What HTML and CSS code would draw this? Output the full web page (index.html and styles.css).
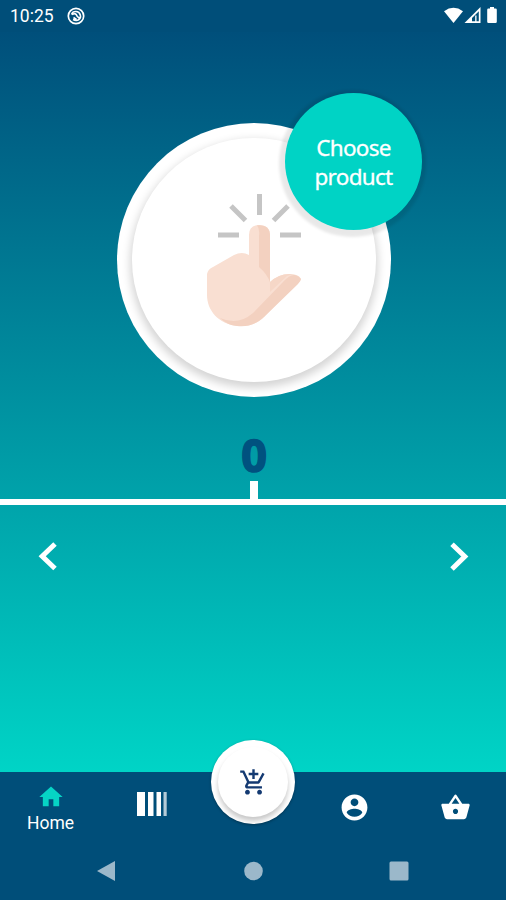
FILE: index.html
```html
<!DOCTYPE html>
<html lang="en">
<head>
    <meta charset="UTF-8">
    <meta name="viewport" content="width=device-width, initial-scale=1.0">
    <title>Home</title>
    <link rel="stylesheet" href="styles.css">
</head>
<body>
    <div class="status-bar">
        <span class="clock">10:25</span>
        <svg class="status-icon" width="18" height="18" viewBox="0 0 18 18" fill="none" stroke="#fff">
            <circle cx="9" cy="9" r="7.7" stroke-width="1.7"/>
            <path d="M4.500 7.500C6 3.500 12 3.500 13.300 8S10 14.500 6 12.500M5 7.500q4-2 5 1.500l3 3M6.500 10.500l3 2" stroke-width="1.600"/>
        </svg>
        <svg class="signals" width="54" height="18" viewBox="0 0 54 18" fill="#fff">
            <path d="M0 4.200Q9.500-2.600 19 4.200L9.500 16z"/>
            <path fill-rule="evenodd" d="M36.500 0v16H20.500zM34.800 4.300L28 11v3.300h3.200V8.500h1.300v5.800h2.300z"/>
            <path d="M46 1.500V0h4v1.500h1.500q1.300 0 1.300 1.300v11.900q0 1.300-1.300 1.300h-7q-1.300 0-1.300-1.300V2.800q0-1.300 1.300-1.300z"/>
        </svg>
    </div>

    <main class="content">
        <div class="product">
            <div class="product-inner">
                <svg width="94" height="134" viewBox="0 0 94 134">
                    <g stroke="#c5c5c5" stroke-width="5">
                        <path d="M52.500 1v21M24 13l14.500 14.500M81 13L66.500 27.500M11 42h21M73 42h21"/>
                    </g>
                    <path fill="#f9dfd2" d="M42 62V42Q42 32 52.500 32T63 42V89Q72 81 82 81 92 81 94 86L55 126Q45 134 31 133C11 131 0 117 0 102V81Q1 76 6 74L27 62Q35 58 42 62z"/>
                    <path fill="#f3d1c0" d="M50 32.300Q63 31 63 43V89Q60 81 52 74V43Q53 36 50 32.300z"/>
                    <path fill="#f6d7c7" d="M63 89Q72 81 82 81L86 81 80 83 63 99z"/>
                    <path fill="#f3d1c0" d="M13 125Q31 133 46 120L76 89Q83 81 88 82 92 83 94 86 94 88 91 91L57 124Q45 135 30 133 20 132 13 125z"/>
                </svg>
            </div>
            <div class="badge">Choose<br>product</div>
        </div>

        <div class="count">0</div>
        <div class="tick"></div>
        <div class="line"></div>

        <div class="arrows">
            <svg width="20" height="30" viewBox="0 0 20 30" fill="none" stroke="#fff" stroke-width="5">
                <path d="M17 3L4.200 15.200 17 27.500"/>
            </svg>
            <svg width="20" height="30" viewBox="0 0 20 30" fill="none" stroke="#fff" stroke-width="5">
                <path d="M3 3.200L15.800 15.500 3 28"/>
            </svg>
        </div>
    </main>

    <nav class="tabs">
        <a class="tab tab-home">
            <svg width="28" height="28" viewBox="0 0 24 24" fill="#06d4c5"><path d="M10 20v-6h4v6h5v-8h3L12 3 2 12h3v8z"/></svg>
            <span>Home</span>
        </a>
        <a class="tab tab-scan">
            <svg width="32" height="26" viewBox="0 0 32 26" fill="#fff">
                <path d="M1 1h8v24H1zM12 1h5.500v24h-5.500zM20.500 1h4.500v24h-4.500z"/>
                <path opacity=".7" d="M27.500 1h3.200v24h-3.200z"/>
            </svg>
        </a>
        <a class="tab tab-cart">
            <span class="cart">
                <span class="cart-inner">
                    <svg width="29" height="29" viewBox="0 0 24 24" fill="#143a72"><path d="M11 9h2V6h3V4h-3V1h-2v3H8v2h3v3zm-4 9c-1.100 0-1.990.9-1.990 2S5.900 22 7 22s2-.9 2-2-.9-2-2-2zm10 0c-1.100 0-1.990.9-1.990 2s.89 2 1.990 2 2-.9 2-2-.9-2-2-2zm-9.830-3.250l.03-.12.9-1.630h7.450c.75 0 1.410-.41 1.750-1.030l3.860-7.010L19.420 4h-.01l-1.100 2-2.760 5H8.530l-.13-.27L6.160 6l-.95-2-.94-2H1v2h2l3.600 7.590-1.350 2.450c-.16.28-.25.61-.25.96 0 1.100.9 2 2 2h12v-2H7.420c-.13 0-.25-.11-.25-.25z"/></svg>
                </span>
            </span>
        </a>
        <a class="tab">
            <svg width="31" height="31" viewBox="0 0 24 24" fill="#fff"><path d="M12 2C6.480 2 2 6.480 2 12s4.480 10 10 10 10-4.480 10-10S17.520 2 12 2zm0 3c1.660 0 3 1.340 3 3s-1.340 3-3 3-3-1.340-3-3 1.340-3 3-3zm0 14.200c-2.500 0-4.710-1.280-6-3.220.03-1.990 4-3.080 6-3.080 1.990 0 5.970 1.090 6 3.080-1.290 1.940-3.500 3.220-6 3.220z"/></svg>
        </a>
        <a class="tab">
            <svg width="31" height="31" viewBox="0 0 24 24" fill="#fff"><path d="M17.210 9l-4.380-6.560c-.19-.28-.51-.42-.83-.42-.32 0-.64.14-.83.43L6.790 9H2c-.55 0-1 .45-1 1 0 .09.01.18.04.27l2.540 9.270c.23.84 1 1.460 1.920 1.460h13c.92 0 1.690-.62 1.930-1.460l2.540-9.270L23 10c0-.55-.45-1-1-1h-4.790zM9 9l3-4.400L15 9H9zm3 8c-1.100 0-2-.9-2-2s.9-2 2-2 2 .9 2 2-.9 2-2 2z"/></svg>
        </a>
    </nav>

    <div class="system-bar">
        <svg width="20" height="22" viewBox="0 0 20 22"><path d="M1 11L19 1v20z"/></svg>
        <svg width="20" height="20" viewBox="0 0 20 20"><circle cx="10.500" cy="10" r="9.300"/></svg>
        <svg width="20" height="20" viewBox="0 0 20 20"><rect x=".5" y=".5" width="19" height="19" rx="1.500"/></svg>
    </div>
</body>
</html>
```

FILE: styles.css
```css
* {
    box-sizing: border-box;
}
body {
    display: flex;
    flex-direction: column;
    height: 900px;
    margin: 0;
    overflow: hidden;
    background-color: #004e79;
    font-family: Roboto, Arial, sans-serif;
    color: white;
}
svg {
    display: block;
}

/* Status bar */
.status-bar {
    display: flex;
    align-items: center;
    height: 32px;
    padding: 0 8px 0 10px;
}
.clock {
    font-size: 17.5px;
}
.status-icon {
    margin-left: 13px;
}
.signals {
    margin-left: auto;
}

/* Main area */
.content {
    display: flex;
    flex-direction: column;
    align-items: center;
    height: 740px;
    padding: 91px 0 0;
    background: linear-gradient(#004f7b, #00d4c6);
}
.product {
    position: relative;
    display: flex;
    flex-shrink: 0;
    align-items: center;
    justify-content: center;
    width: 274px;
    height: 274px;
    margin-left: 2px;
    border-radius: 50%;
    background-color: #fff;
}
.product-inner {
    display: flex;
    justify-content: center;
    width: 244px;
    height: 244px;
    padding-top: 55px;
    border-radius: 50%;
    background-color: #fff;
    box-shadow: 0 4px 9px 2px rgba(0, 0, 0, 0.17);
}
.badge {
    position: absolute;
    top: -30px;
    left: 168px;
    display: flex;
    align-items: center;
    justify-content: center;
    width: 137px;
    height: 137px;
    border-radius: 50%;
    background-color: #00d3c5;
    box-shadow: -1px 2px 3px 5px rgba(0, 0, 0, 0.09);
    font-family: "Noto Sans", sans-serif;
    font-size: 22.5px;
    letter-spacing: -0.7px;
    line-height: 29px;
    text-align: center;
    -webkit-text-stroke: 0.3px #fff;
}
.count {
    height: 84px;
    padding-top: 32px;
    margin-left: 2px;
    color: #00517f;
    font-family: "Noto Sans", sans-serif;
    font-size: 45px;
    font-weight: 700;
    line-height: 52px;
    -webkit-text-stroke: 1.5px #00517f;
}
.tick {
    width: 8px;
    height: 18px;
    margin-left: 2px;
    background-color: #fff;
}
.line {
    width: 100%;
    height: 6px;
    background-color: #fff;
}
.arrows {
    display: flex;
    justify-content: space-between;
    width: 100%;
    padding: 36px 37px 0 38px;
}

/* Bottom navigation */
.tabs {
    display: grid;
    grid-template-columns: repeat(5, 1fr);
    height: 70px;
}
.tab {
    display: flex;
    flex-direction: column;
    align-items: center;
    justify-content: center;
}
.tab-home {
    justify-content: flex-start;
    padding-top: 11px;
    font-size: 17.5px;
    line-height: 24px;
}
.tab-scan {
    padding-bottom: 6px;
}
.tab-cart {
    justify-content: flex-start;
}
.cart {
    display: flex;
    align-items: center;
    justify-content: center;
    width: 84px;
    height: 84px;
    margin-top: -32px;
    margin-left: 1px;
    border-radius: 50%;
    background-color: #fff;
    box-shadow: 0 1px 3px rgba(0, 0, 0, 0.3);
}
.cart-inner {
    display: flex;
    align-items: center;
    justify-content: center;
    width: 70px;
    height: 70px;
    border-radius: 50%;
    background-color: #fff;
    box-shadow: 0 4px 5px rgba(0, 0, 0, 0.22);
}

/* Android buttons */
.system-bar {
    display: flex;
    align-items: center;
    justify-content: space-between;
    height: 58px;
    padding: 0 97px 0 96px;
    fill: #9bb8ca;
}
```
